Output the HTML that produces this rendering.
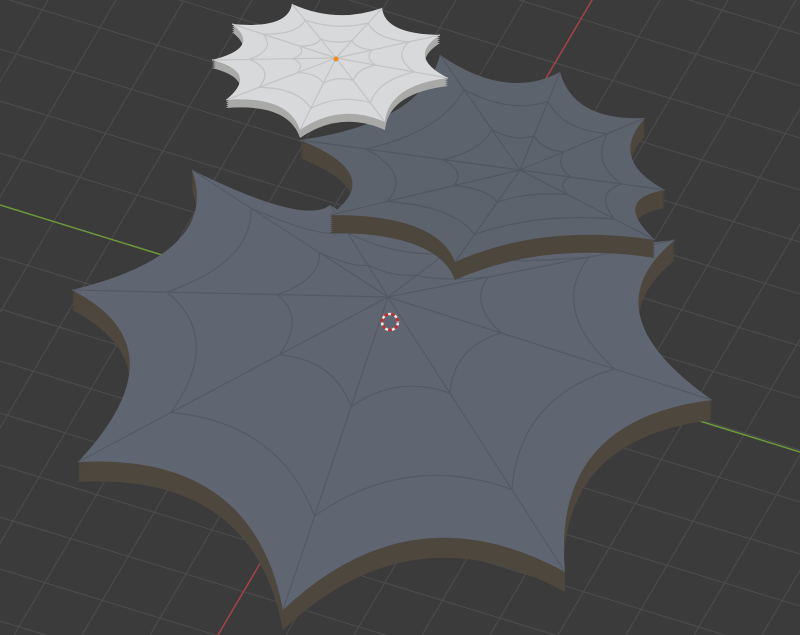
<!DOCTYPE html>
<html><head><meta charset="utf-8"><style>
html,body{margin:0;padding:0;background:#3b3b3b;overflow:hidden;width:800px;height:635px}
svg{display:block}
</style></head><body>
<svg id="s" width="800" height="635" viewBox="0 0 800 635" xmlns="http://www.w3.org/2000/svg">
<rect width="800" height="635" fill="#3b3b3b"/>
<g id="grid" stroke="#4d4d4d" stroke-width="1"></g>
<line x1="0" y1="205" x2="800" y2="452" stroke="#6a9a3a" stroke-width="1.5"/>
<line x1="595" y1="-5" x2="215" y2="640" stroke="#a8404a" stroke-width="1.5"/>
<g id="webs"></g>
</svg>
<script>
var NS="http://www.w3.org/2000/svg";
var g=document.getElementById('grid');
function L(p,x1,y1,x2,y2){var l=document.createElementNS(NS,'line');l.setAttribute('x1',x1);l.setAttribute('y1',y1);l.setAttribute('x2',x2);l.setAttribute('y2',y2);p.appendChild(l);}
for(var i=-30;i<30;i++){var y0=205+i*52;L(g,0,y0,800,y0+245);}
for(var i=-30;i<30;i++){var x0=595+i*68;L(g,x0,-5,x0-380,640);}
var W=document.getElementById('webs');
function path(c,t,k,dy){var d='';for(var i=0;i<t.length;i++){var a=t[i],b=t[(i+1)%t.length];var mx=(a[0]+b[0])/2,my=(a[1]+b[1])/2;var cx=mx+(c[0]-mx)*k,cy=my+(c[1]-my)*k;if(i==0)d+='M'+a[0]+' '+(a[1]+dy);d+=' Q'+cx+' '+(cy+dy)+' '+b[0]+' '+(b[1]+dy);}return d+'Z';}
function web(c,t,top,side,line,th){
 for(var s=0;s<=th;s+=2){var q=document.createElementNS(NS,'path');q.setAttribute('d',path(c,t,0.35,s));q.setAttribute('fill',side);W.appendChild(q);}
 var p2=document.createElementNS(NS,'path');p2.setAttribute('d',path(c,t,0.35,0));p2.setAttribute('fill',top);W.appendChild(p2);
 var gg=document.createElementNS(NS,'g');gg.setAttribute('stroke',line);gg.setAttribute('fill','none');gg.setAttribute('stroke-width','1.2');W.appendChild(gg);
 t.forEach(function(a){L(gg,c[0],c[1],a[0],a[1]);});
 [0.35,0.7].forEach(function(f){var tt=t.map(function(a){return [c[0]+(a[0]-c[0])*f,c[1]+(a[1]-c[1])*f]});var q=document.createElementNS(NS,'path');q.setAttribute('d',path(c,tt,0.25,0));gg.appendChild(q);});
}
web([388,297],[[72,290],[192,170],[330,205],[470,235],[675,240],[712,400],[565,572],[283,610],[78,462]],'#5f6672','#4e473d','#535a65',20);
web([520,170],[[300,140],[440,55],[560,72],[645,118],[665,190],[655,240],[455,262],[330,215]],'#5d636d','#4d463c','#515761',18);
web([336,58],[[212,60],[232,24],[292,4],[382,8],[440,35],[448,78],[385,122],[300,130],[226,100]],'#d8d9da','#a9a9a8','#c2c3c5',8);
var cc=document.createElementNS(NS,'circle');cc.setAttribute('cx',390);cc.setAttribute('cy',322);cc.setAttribute('r',8);cc.setAttribute('fill','none');cc.setAttribute('stroke','#e6e6e6');cc.setAttribute('stroke-width','2.5');cc.setAttribute('stroke-dasharray','4 3');W.appendChild(cc);
var c2=cc.cloneNode();c2.setAttribute('stroke','#c03030');c2.setAttribute('stroke-dashoffset','3.5');W.appendChild(c2);
var o=document.createElementNS(NS,'circle');o.setAttribute('cx',336);o.setAttribute('cy',59);o.setAttribute('r',2.5);o.setAttribute('fill','#f08a20');W.appendChild(o);
</script>
</body></html>
